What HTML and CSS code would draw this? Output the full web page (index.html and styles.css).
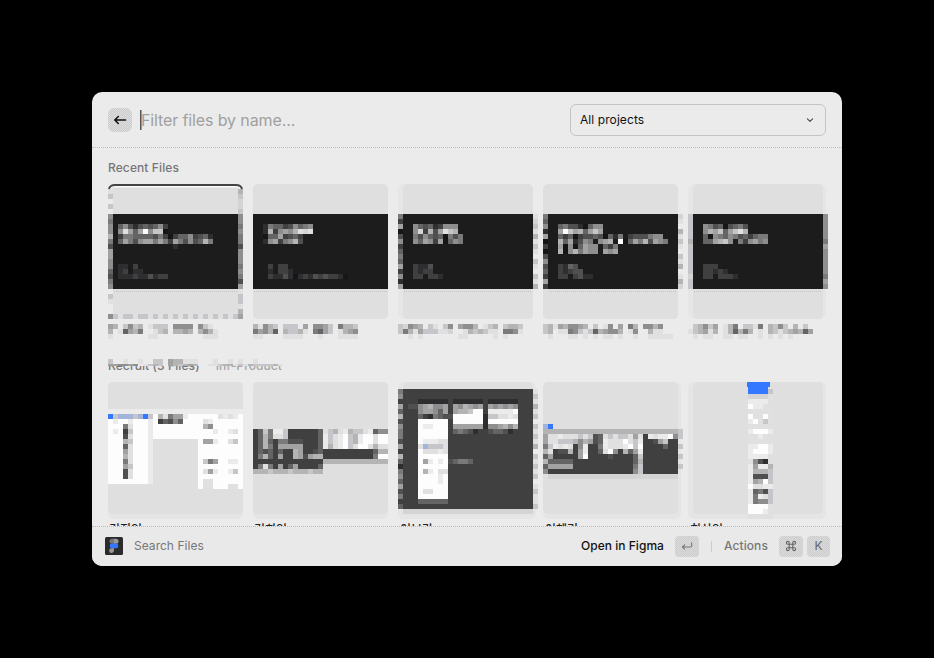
FILE: index.html
```html
<!DOCTYPE html>
<html lang="en">
<head>
<meta charset="utf-8">
<title>Search Files</title>
<link rel="stylesheet" href="styles.css">
</head>
<body>
<main class="window">
  <header class="header">
    <button class="back" aria-label="Back"><svg width="24" height="24" viewBox="0 0 24 24"><path d="M17.5 12H6.8M10.3 8.5 6.8 12l3.5 3.5" fill="none" stroke="#111" stroke-width="1.6" stroke-linecap="round" stroke-linejoin="round"/></svg></button>
    <div class="search"><span class="caret"></span>Filter files by name...</div>
    <div class="select"><span>All projects</span><svg width="10" height="10" viewBox="0 0 10 10"><path d="M2.4 3.9 5 6.4l2.6-2.5" fill="none" stroke="#444" stroke-width="1.1" stroke-linecap="round" stroke-linejoin="round"/></svg></div>
  </header>
  <section class="content">
    <h2 class="heading">Recent Files</h2>
    <div class="grid" id="recent"></div>
    <h2 class="heading project"><span>Recruit (3 Files)</span><span class="team">Inf-Product</span><span class="mask" id="mask"></span></h2>
    <div class="grid" id="recruit"></div>
  </section>
  <footer class="footer">
    <svg class="logo" width="18" height="18" viewBox="0 0 18 18"><rect width="18" height="18" rx="1.5" fill="#2b2b2b"/><path d="M9 1.8H7a2.5 2.5 0 0 0 0 5h2z" fill="#777"/><path d="M9 1.8h2a2.5 2.5 0 0 1 0 5H9z" fill="#999"/><path d="M9 6.6H7a2.3 2.3 0 0 0 0 4.6h4a2.3 2.3 0 0 0 0-4.6z" fill="#3478ff"/><path d="M9 11.2H7a2.4 2.4 0 1 0 2 2.4z" fill="#999"/></svg>
    <span class="command">Search Files</span>
    <span class="primary">Open in Figma</span>
    <kbd class="key enter"><svg width="12" height="12" viewBox="0 0 12 12"><path d="M10.7 2.7v3.1c0 .8-.5 1.2-1.2 1.2H1.5M3.7 4.8 1.5 7l2.2 2.2" fill="none" stroke="#777" stroke-width="1.1" stroke-linecap="round" stroke-linejoin="round"/></svg></kbd>
    <span class="divider"></span>
    <span class="actions">Actions</span>
    <kbd class="key"><svg width="12" height="12" viewBox="0 0 12 12"><path d="M4.2 4.2h3.6v3.6H4.2zM4.2 4.2H2.8a1.4 1.4 0 1 1 1.4-1.4zM7.8 4.2V2.8a1.4 1.4 0 1 1 1.4 1.4zM7.8 7.8h1.4a1.4 1.4 0 1 1-1.4 1.4zM4.2 7.8v1.4a1.4 1.4 0 1 1-1.4-1.4z" fill="none" stroke="#666" stroke-width="1.1"/></svg></kbd>
    <kbd class="key last">K</kbd>
  </footer>
</main>
<script src="thumbs.js"></script>
</body>
</html>
```

FILE: styles.css
```css
* { box-sizing: border-box; }
body {
  margin: 0;
  height: 658px;
  padding: 92px;
  background: #000;
  font-family: Inter, "Noto Sans CJK KR", sans-serif;
  overflow: hidden;
}
.window {
  display: flex;
  flex-direction: column;
  width: 750px;
  height: 474px;
  border-radius: 10px;
  background: #ebebeb;
  overflow: hidden;
}
.header {
  display: flex;
  align-items: center;
  height: 56px;
  padding: 0 16px;
  border-bottom: 1px dotted #bcbcbf;
  flex: none;
}
.back {
  width: 24px;
  height: 24px;
  padding: 0;
  border: 0;
  border-radius: 6px;
  background: repeating-conic-gradient(#cdcdd0 0 25%, #dcdcdc 0 50%) 0 0 / 2px 2px;
}
.search {
  display: flex;
  align-items: center;
  flex: 1;
  margin-left: 8px;
  color: #a0a0a0;
  font-size: 16px;
  letter-spacing: -.12px;
}
.caret { width: 1px; height: 20px; background: #555; box-shadow: 1px 0 #999; }
.select {
  display: flex;
  align-items: center;
  justify-content: space-between;
  width: 256px;
  height: 32px;
  padding: 0 10px 0 9px;
  border: 1px solid #c3c3c6;
  border-radius: 6px;
  font-size: 12px;
  color: #111;
  letter-spacing: .08px;
}
.content { flex: 1; min-height: 0; padding: 12px 16px 0; overflow: hidden; }
.heading {
  display: flex;
  height: 16px;
  margin: 0 0 8px;
  font-size: 12px;
  line-height: 16px;
  font-weight: 500;
  letter-spacing: .1px;
  color: #777;
}
.grid { display: grid; grid-template-columns: repeat(5, 140px); column-gap: 5px; width: 720px; }
.card svg { display: block; }
.caption { margin-top: 5px; }
.project { position: relative; margin-top: 19px; }
.team { margin-left: 16px; color: #a5a5a5; }
.mask { position: absolute; left: 0; top: 1px; height: 7px; width: 180px; overflow: hidden; background: #ebebeb; }
.mask svg { display: block; }
.name { margin: 2px 0 0 1px; font-size: 12px; line-height: 18px; font-weight: 500; color: #222; white-space: nowrap; }
.card:nth-child(n+3) .name { margin-left: 2px; }
.footer {
  display: flex;
  align-items: center;
  flex: none;
  height: 40px;
  padding: 0 12px 1px 13px;
  border-top: 1px dotted #bcbcbf;
  background: #e9e9e9;
  font-size: 12px;
  color: #777;
  letter-spacing: .03px;
}
.command, .primary, .actions { padding-bottom: 2px; }
.command { flex: 1; margin-left: 11px; }
.primary { color: #111; font-weight: 500; }
.key {
  display: flex;
  align-items: center;
  justify-content: center;
  width: 24px;
  height: 21px;
  border-radius: 4px;
  background: repeating-conic-gradient(#cdcdd0 0 25%, #dadada 0 50%) 0 0 / 2px 2px;
  font: 12px Inter, sans-serif;
  color: #666;
}
.enter { margin-left: 11px; }
.divider { width: 1px; height: 11px; margin: 0 12px; background: #ccc; }
.actions { margin-right: 11px; font-weight: 500; letter-spacing: .1px; }
.last { margin-left: 4px; width: 23px; padding-bottom: 1px; }
```

FILE: thumbs.js
```js
// Each character is one 5px cell of a mosaic thumbnail; "." leaves the cell empty.
const palette = {
  0: '#161616', 1: '#2e2e30', 2: '#404040', 3: '#505050', 4: '#646464', 5: '#7a7a7a', 6: '#8e8e8e',
  7: '#a2a2a2', 8: '#b4b4b4', 9: '#c6c6ca', a: '#d4d4d4', b: '#e0e0e0', c: '#ebebeb', d: '#fdfdfd',
  B: '#3478ff', m: '#a3b4da'
};
const rect = (x, y, w, h, fill, rx = 0) => `<rect x="${x}" y="${y}" width="${w}" height="${h}" fill="${fill}" rx="${rx}"/>`;
const cells = (rows, dy = 0) => rows.map(([c, r, text, down]) => [...text].map((ch, i) =>
  ch === '.' ? '' : rect((c + (down ? 0 : i)) * 5, (r + (down ? i : 0)) * 5 + dy, 5, 5, palette[ch])).join('')).join('');
const svg = (h, body) => `<svg width="140" height="${h}" viewBox="0 0 140 ${h}" shape-rendering="crispEdges">${body}</svg>`;
const dots = (x, w, y) => `<path d="M${x + 1} ${y}.5h${w - 2}" stroke="#c4c4c4" stroke-dasharray="1 1"/>`;

const recent = [
  { tile: [5, 125], soft: [0, 135], dark: [5, 125], selected: true, rows: [
    [2, 8, '4631343462'], [2, 9, '6b747d6990'], [2, 10, '2554444352024462341'], [2, 11, '4753677575275363485'], [13, 12, '1'],
    [2, 16, '11.2'], [2, 17, '12.11'], [2, 18, '1112113122'],
    [0, 1, 'b9c9c', true], [0, 6, '656685377664356', true], [0, 21, 'c9bcc6', true],
    [26, 1, '89aa9', true], [26, 6, '665655366656537', true], [26, 21, 'b99b87', true], [1, 26, '9b99b99b9b9b9b9b9b9b9b9b9']],
    title: ['78.9698.b999.6666.69b', '8.b4785.cb98.8878.868b', 'b.......bb.........bbb'] },
  { tile: [0, 135], soft: [0, 135], dark: [0, 135], rows: [
    [2, 8, '1544236456'], [2, 9, '1826768bab'], [2, 10, '04472342'], [2, 11, '16725683'],
    [3, 16, '2.22'], [3, 17, '1.221'], [3, 18, '2113101213232210']],
    title: ['8b689.999.7.6679.5889', '57684.8998b.5479.b876', 'bb....bbbb...b...bbbb'] },
  { tile: [5, 130], soft: [0, 135], dark: [5, 130], rows: [
    [3, 8, '643412666'], [3, 9, '6a2837b98'], [3, 10, '5364340535'], [3, 11, '6476270465'],
    [3, 16, '2113'], [3, 17, '2122'], [3, 18, '22.221'], [0, 6, '527036245472617', true], [27, 6, 'ba9b8b9bc9bc9b8', true]],
    title: ['9a678.9b.96.7668.b98.9889', '958b7999bba..b8989bb.556b', '..b.b.......bb.....b.b'] },
  { tile: [0, 135], soft: [0, 135], dark: [5, 130], rows: [
    [3, 8, '453310466'], [3, 9, '7d9784797'], [3, 10, '42402334.30415.2333566'.replace('.30', '30')], [3, 11, '8471365.678.d047583765'], [3, 12, '70604766.425'], [3, 13, '80685766.767'],
    [3, 16, '2143'], [3, 17, '21233'], [3, 18, '22.2311'], [0, 6, '546170203634272', true], [27, 6, 'abc8b9bc9b8cb8a', true]],
    title: ['98b786678.9.b6.7.58.6686', '98.bb569b9487668.b6..8bb', '.b...bb.b.b.bb.b..b..bbbbb'] },
  { tile: [5, 130], soft: [0, 138], dark: [5, 130], rows: [
    [3, 8, '653403453'], [3, 9, '6879479b8'], [3, 10, '4065465342455'], [3, 11, '447896.526756'],
    [3, 16, '222'], [3, 17, '22121'], [3, 18, '22.2221'], [0, 6, '999998999999a99', true], [27, 6, '666665766666576', true]],
    title: ['.98697.b85.99b5.8969.8.9', 'b987b8.b84858.b.89b987847', '.b.bb..bb.bb..b.b.b.b'] }
];

const band = (c, r, text, n) => Array.from({ length: n }, (_, i) => [c, r + i, text]);
const recruit = [
  { name: '김지인', tile: [0, 135], soft: [0, 135], rows: [
    [0, 5, 'c'.repeat(27)], ...band(0, 6, 'd'.repeat(27), 5), ...band(0, 11, 'ddddddddd', 9), ...band(18, 11, 'ddddddddd', 10),
    [0, 6, 'B9mmm9mB9d8b577cddddddbcbcd'], [10, 7, '24364'], [1, 7, 'c.c', true], [8, 7, 'ccccccccccccc', true],
    [3, 8, '52384785733', true], [4, 7, 'cb9b9bbbb9bb', true], [19, 7, 'bc'], [19, 8, '86'], [21, 9, 'c..cb'],
    [19, 11, '77c..b9'], [19, 15, '957..cc'], [19, 17, 'b7c..c9'], [19, 19, 'bb'], [19, 20, 'bb...bb']] },
  { name: '김희인', tile: [0, 135], soft: [0, 135], rows: [
    [0, 9, '2495cc92222224b98bc899bc466'], [0, 10, '2485bb92222224c9bcd98cddbdd'], [0, 11, '24842553332224c9bcd98cddbdd'],
    [0, 12, '24852777772224c8bcd9bddb8bb'], [0, 13, '243424228722342222222222488'], [0, 14, '2584272287378822222222225dd'],
    [0, 15, '222222222222228888888888888'], [0, 16, '25b52724722224'], [0, 17, '88898889888988']] },
  { name: '이보람', tile: [5, 130], soft: [0, 138], rows: [
    ...band(1, 1, '2'.repeat(26), 24), ...band(4, 7, 'dddddd', 16), [4, 3, '111111.111111.111111'],
    [2, 4, '33678667.768767.767676'], [4, 5, '677647.7889dd.cccccd'], [4, 6, '4215433dddddd199bbcb'], [11, 7, 'dddddd1dddddd'],
    [5, 8, 'cc'], [11, 8, '7777771667868'], [11, 9, '45431..34431'], [4, 11, 'dcccbb'], [4, 12, 'bm999b'], [4, 13, 'dbbbcb'],
    [5, 15, '7c.c'], [10, 15, '34554'], [5, 17, '8c.bb'], [8, 18, 'c'], [8, 19, 'c'], [5, 21, 'bb'], [4, 23, '444444'],
    [0, 1, '562748365537284156473524', true], [27, 1, 'b9b8b9c9b9b8c9b9b9cb9bb9', true], [1, 25, 'a'.repeat(26)]] },
  { name: '이혜리', tile: [0, 135], soft: [0, 138], rows: [
    [0, 8, 'mB'], [0, 9, '8'.repeat(27) + '9'], [0, 10, '7bbcbbb9b934b9b99b7b2cbccd69'], [0, 11, '7bb999868734cbbbdb9c2237922.'],
    [0, 12, '59cbcb26c225cbbbcd9d22224229'], [0, 13, '8b233827c224bd62847c2222222.'], [0, 14, '47222227d2222322224922222229'],
    [0, 15, '844444222222222222482222222.'], [0, 16, '4777772222222222225922222229'], [0, 17, '622222222222222222692222222.'], [1, 18, 'a'.repeat(26)]] },
  { name: '최상인', tile: [5, 130], soft: [0, 138], rows: [
    [12, 0, 'BBBBb'], [12, 1, 'BBBB9'], [12, 2, 'aaaab'], ...['ccccb', 'dccb', 'bbbbb', 'dbbdb', 'cdb9b', 'bbbbb', 'cdddc', 'bbcb', 'bbbbb',
      'ccddc', 'cdddc', 'cccc', 'b631', 'c7cc8', 'c8889', 'c3339', 'c78d9', 'dbbcc', 'c4539', 'c5cb9', 'c5669', 'ddddb', 'dddcb', 'bbbbb'].map((t, i) => [12, i + 3, t])],
    extra: rect(59, 0, 23, 5, palette.B) }
];

document.getElementById('recent').innerHTML = recent.map(f => {
  let body = rect(f.soft[0], 0, f.soft[1], 135, '#e6e6e6', 6) + rect(f.tile[0], 0, f.tile[1], 135, '#dfdfdf', 5);
  if (f.selected) body = rect(0, 0, 135, 135, '#ebebeb', 6) + rect(5, 4, 125, 127, '#dfdfdf');
  body += rect(f.dark[0], 30, f.dark[1], 75, '#1c1c1c') + dots(f.dark[0], f.dark[1], 107) + cells(f.rows);
  if (f.selected) body += '<path d="M3 4.5q0-2 4-2h121q4 0 4 2" fill="none" stroke="#fafafa"/><path d="M1 5Q2 1 7 1h121q5 0 6 4" fill="none" stroke="#444" stroke-width="2" shape-rendering="auto"/>';
  return `<div class="card">${svg(135, body)}<div class="caption">${svg(15, cells(f.title.map((t, i) => [0, i, t])))}</div></div>`;
}).join('');

document.getElementById('recruit').innerHTML = recruit.map(f =>
  `<div class="card">${svg(137, rect(f.soft[0], 0, f.soft[1], 137, '#e5e5e5', 6) + rect(f.tile[0], 0, f.tile[1], 132, '#dfdfdf', 5) + cells(f.rows, 2) + (f.extra || ''))}<div class="name">${f.name}</div></div>`).join('');

document.getElementById('mask').innerHTML =
  svg(10, cells([[0, 0, '9..b..b..99.788bbb...b..b.b'], [0, 1, '776676.b989.789878..bb988b9']])).replace('width="140"', 'width="180"').replace('0 0 140', '0 0 180')
    .replace('</svg>', cells([[27, 0, '..b.....'], [27, 1, 'b899998b']]) + '</svg>');
```
